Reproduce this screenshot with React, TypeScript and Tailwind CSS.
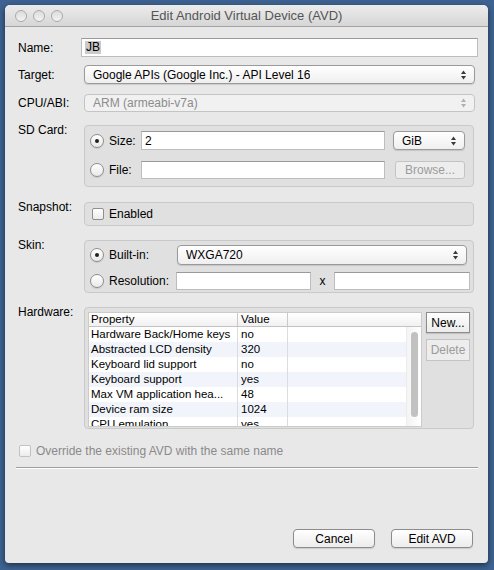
import type { ReactNode } from "react";

const font = { fontFamily: '"Liberation Sans", Arial, sans-serif' };

const hardwareRows = [
  { property: "Hardware Back/Home keys", value: "no" },
  { property: "Abstracted LCD density", value: "320" },
  { property: "Keyboard lid support", value: "no" },
  { property: "Keyboard support", value: "yes" },
  { property: "Max VM application hea...", value: "48" },
  { property: "Device ram size", value: "1024" },
  { property: "CPU emulation", value: "yes" },
];

function Arrows({ disabled = false }: { disabled?: boolean }) {
  const fill = disabled ? "#b0b0b0" : "#3a3a3a";
  return (
    <svg width="7" height="10" viewBox="0 0 7 10" aria-hidden="true">
      <path d="M3.5 0.5 L6 4 L1 4 Z" fill={fill} />
      <path d="M1 6 L6 6 L3.5 9.5 Z" fill={fill} />
    </svg>
  );
}

function PopUp({
  children,
  disabled = false,
  className = "",
}: {
  children: ReactNode;
  disabled?: boolean;
  className?: string;
}) {
  return (
    <div
      className={`flex items-center justify-between rounded-[4px] border pl-[8px] pr-[7px] ${
        disabled
          ? "border-[#c4c4c4] bg-[#f1f1f1] text-[#8c8c8c]"
          : "border-[#9a9a9a] bg-gradient-to-b from-white to-[#efefef] text-black shadow-[0_1px_1px_rgba(0,0,0,0.12)]"
      } ${className}`}
    >
      <span className="truncate">{children}</span>
      <Arrows disabled={disabled} />
    </div>
  );
}

function TextField({ className = "", children }: { className?: string; children?: ReactNode }) {
  return (
    <div
      className={`flex items-center border border-[#bdbdbd] border-t-[#9a9a9a] bg-white pl-[3px] ${className}`}
    >
      {children}
    </div>
  );
}

function Radio({ checked = false }: { checked?: boolean }) {
  return (
    <span className="flex size-[14px] shrink-0 items-center justify-center rounded-full border border-[#8e8e8e] bg-gradient-to-b from-white to-[#e9e9e9] shadow-[0_1px_1px_rgba(0,0,0,0.1)]">
      {checked && <span className="size-[4px] rounded-full bg-[#222]" />}
    </span>
  );
}

function CheckBox({ disabled = false }: { disabled?: boolean }) {
  return (
    <span
      className={`block size-[12px] shrink-0 rounded-[2px] border bg-gradient-to-b from-white to-[#ececec] ${
        disabled ? "border-[#c2c2c2]" : "border-[#8e8e8e]"
      }`}
    />
  );
}

function MacButton({
  children,
  disabled = false,
  className = "",
}: {
  children: ReactNode;
  disabled?: boolean;
  className?: string;
}) {
  return (
    <div
      className={`flex items-center justify-center border ${
        disabled
          ? "border-[#c4c4c4] bg-[#ededed] text-[#9b9b9b]"
          : "border-[#8c8c8c] bg-gradient-to-b from-white to-[#ececec] text-black shadow-[0_1px_1px_rgba(0,0,0,0.12)]"
      } ${className}`}
    >
      {children}
    </div>
  );
}

function Group({ children, className = "" }: { children: ReactNode; className?: string }) {
  return (
    <div
      className={`ml-[3px] mr-[4px] flex-1 rounded-[4px] border border-[#c9c9c9] bg-[#e0e0e0] ${className}`}
    >
      {children}
    </div>
  );
}

function TrafficLight() {
  return (
    <span className="block size-[12px] rounded-full border border-[#a9a9a9] bg-gradient-to-b from-[#dcdcdc] to-[#f3f3f3]" />
  );
}

export default function App() {
  return (
    <div
      className="h-[570px] w-[494px] bg-[#3e6392] pl-[5px] pt-[5px] text-[12px] text-black"
      style={font}
    >
      <div className="flex h-[558px] w-[483px] flex-col overflow-hidden rounded-t-[5px] rounded-b-[4px] bg-[#e8e8e8] shadow-[0_2px_6px_rgba(0,0,0,0.55)]">
        {/* title bar */}
        <div className="relative flex h-[22px] shrink-0 items-center border-b border-[#a3a3a3] bg-gradient-to-b from-[#ececec] to-[#d6d6d6]">
          <div className="flex gap-[6px] pl-[10px]">
            <TrafficLight />
            <TrafficLight />
            <TrafficLight />
          </div>
          <div className="absolute inset-0 flex items-center justify-center text-[13px] text-[#555]">
            Edit Android Virtual Device (AVD)
          </div>
        </div>

        <div className="flex flex-1 flex-col pl-[13px] pr-[10px] pt-[11px]">
          {/* Name */}
          <div className="flex h-[19px] items-center">
            <span className="w-[63px]">Name:</span>
            <TextField className="h-[19px] flex-1 border-[#9c9c9c]">
              <span className="bg-[#cacaca] px-[1px] leading-[13px]">JB</span>
            </TextField>
          </div>

          {/* Target */}
          <div className="mt-[8px] flex h-[19px] items-center">
            <span className="w-[63px]">Target:</span>
            <PopUp className="ml-[3px] mr-[3px] h-[19px] flex-1">
              Google APIs (Google Inc.) - API Level 16
            </PopUp>
          </div>

          {/* CPU/ABI */}
          <div className="mt-[10px] flex h-[18px] items-center">
            <span className="w-[63px]">CPU/ABI:</span>
            <PopUp disabled className="ml-[3px] mr-[3px] h-[18px] flex-1">
              ARM (armeabi-v7a)
            </PopUp>
          </div>

          {/* SD Card */}
          <div className="mt-[13px] flex">
            <span className="w-[63px] leading-[10px]">SD Card:</span>
            <Group className="h-[62px] pl-[5px] pr-[8px] pt-[5px]">
              <div className="flex h-[19px] items-center">
                <Radio checked />
                <span className="ml-[5px] w-[32px]">Size:</span>
                <TextField className="h-[19px] w-[244px]">2</TextField>
                <PopUp className="ml-[8px] h-[19px] flex-1">GiB</PopUp>
              </div>
              <div className="mt-[11px] flex h-[18px] items-center">
                <Radio />
                <span className="ml-[5px] w-[32px]">File:</span>
                <TextField className="h-[18px] w-[244px]" />
                <MacButton disabled className="ml-[10px] h-[18px] flex-1 rounded-[3px]">
                  Browse...
                </MacButton>
              </div>
            </Group>
          </div>

          {/* Snapshot */}
          <div className="mt-[15px] flex">
            <span className="w-[63px] leading-[10px]">Snapshot:</span>
            <Group className="flex h-[24px] items-center pl-[7px]">
              <CheckBox />
              <span className="ml-[5px]">Enabled</span>
            </Group>
          </div>

          {/* Skin */}
          <div className="mt-[14px] flex">
            <span className="w-[63px] leading-[10px]">Skin:</span>
            <Group className="h-[53px] pl-[5px] pr-[3px] pt-[4px]">
              <div className="flex h-[20px] items-center">
                <Radio checked />
                <span className="ml-[5px] w-[68px]">Built-in:</span>
                <PopUp className="mr-[3px] h-[20px] flex-1">WXGA720</PopUp>
              </div>
              <div className="mt-[7px] flex h-[18px] items-center">
                <Radio />
                <span className="ml-[5px] w-[67px]">Resolution:</span>
                <TextField className="h-[18px] w-[135px]" />
                <span className="w-[23px] text-center">x</span>
                <TextField className="h-[18px] flex-1" />
              </div>
            </Group>
          </div>

          {/* Hardware */}
          <div className="mt-[14px] flex">
            <span className="w-[63px] leading-[10px]">Hardware:</span>
            <Group className="flex h-[122px] pl-[3px] pt-[4px]">
              <div className="relative h-[115px] w-[334px] overflow-hidden border border-[#cbcbcb] bg-white text-[11.5px]">
                <div className="flex h-[14px] border-b border-[#c3c3c3] bg-gradient-to-b from-white to-[#f1f1f1] leading-[13px]">
                  <span className="w-[149px] border-r border-[#c9c9c9] pl-[2px]">Property</span>
                  <span className="w-[50px] border-r border-[#c9c9c9] pl-[3px]">Value</span>
                </div>
                {hardwareRows.map((row, i) => (
                  <div
                    key={row.property}
                    className={`flex h-[15px] leading-[15px] ${i % 2 === 1 ? "bg-[#f1f5fb]" : "bg-white"}`}
                  >
                    <span className="w-[149px] border-r border-[#dcdcdc] pl-[2px] whitespace-nowrap">
                      {row.property}
                    </span>
                    <span className="w-[50px] border-r border-[#dcdcdc] pl-[3px]">{row.value}</span>
                  </div>
                ))}
                {/* scroll bar */}
                <div className="absolute bottom-0 right-0 top-[14px] w-[15px] border-l border-[#ececec] bg-gradient-to-r from-[#f4f4f4] to-white">
                  <div className="ml-[4px] mt-[5px] h-[85px] w-[7px] rounded-full bg-[#c1c1c1]" />
                </div>
              </div>
              <div className="ml-[4px] flex flex-col gap-[6px]">
                <MacButton className="h-[21px] w-[44px]">New...</MacButton>
                <MacButton disabled className="h-[22px] w-[44px]">
                  Delete
                </MacButton>
              </div>
            </Group>
          </div>

          {/* Override */}
          <div className="mt-[13px] flex items-center pl-[1px] text-[#8a8a8a]">
            <CheckBox disabled />
            <span className="ml-[5px]">Override the existing AVD with the same name</span>
          </div>

          <div className="ml-[-2px] mt-[7px] border-b border-t border-b-white border-t-[#9d9d9d]" />

          <div className="mt-[60px] flex justify-end gap-[16px] pr-[5px]">
            <MacButton className="h-[19px] w-[82px] rounded-[4px]">Cancel</MacButton>
            <MacButton className="h-[19px] w-[82px] rounded-[4px]">Edit AVD</MacButton>
          </div>
        </div>
      </div>
    </div>
  );
}
